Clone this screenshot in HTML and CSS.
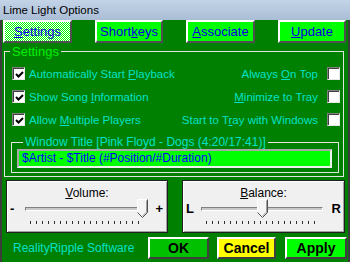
FILE: index.html
```html
<!DOCTYPE html>
<html lang="en">

<head>
    <meta charset="UTF-8">
    <title>Lime Light Options</title>
    <link rel="stylesheet" href="styles.css">
</head>

<body>
    <div class="window">
        <div class="titlebar">Lime Light Options</div>

        <div class="tabs">
            <div class="tab tab-active"><span><u>S</u>ettings</span></div>
            <div class="tab tab-narrow"><span>Short<u>k</u>eys</span></div>
            <div class="tab"><span><u>A</u>ssociate</span></div>
            <div class="tab tab-narrow"><span><u>U</u>pdate</span></div>
        </div>

        <fieldset class="group">
            <legend class="group-title">Settings</legend>
            <div class="options">
                <div class="opt"><span class="box checked"><svg width="9" height="9" viewBox="0 0 9 9"><polyline points="1,4 3.5,6.5 8,2" fill="none" stroke="#000" stroke-width="2"/></svg></span><span>Automatically Start <u>P</u>layback</span></div>
                <div class="opt opt-right"><span>Always <u>O</u>n Top</span><span class="box"></span></div>
                <div class="opt"><span class="box checked"><svg width="9" height="9" viewBox="0 0 9 9"><polyline points="1,4 3.5,6.5 8,2" fill="none" stroke="#000" stroke-width="2"/></svg></span><span>Show Song <u>I</u>nformation</span></div>
                <div class="opt opt-right"><span><u>M</u>inimize to Tray</span><span class="box"></span></div>
                <div class="opt"><span class="box checked"><svg width="9" height="9" viewBox="0 0 9 9"><polyline points="1,4 3.5,6.5 8,2" fill="none" stroke="#000" stroke-width="2"/></svg></span><span>Allow <u>M</u>ultiple Players</span></div>
                <div class="opt opt-right"><span>Start to T<u>r</u>ay with Windows</span><span class="box"></span></div>
            </div>

            <fieldset class="title-group">
                <legend class="title-legend">Window Title [Pink Floyd - Dogs (4:20/17:41)]</legend>
                <div class="title-input">$Artist - $Title (#Position/#Duration)</div>
            </fieldset>
        </fieldset>

        <div class="sliders">
            <div class="panel panel-volume">
                <div class="slider-label"><u>V</u>olume:</div>
                <div class="slider-row">
                    <span class="end end-left">-</span>
                    <div class="slider">
                        <div class="track"></div>
                        <div class="ticks"></div>
                        <svg class="thumb" style="--pos: 1" width="11" height="19" viewBox="0 0 11 19">
                            <polygon points="0.5,0.5 10.5,0.5 10.5,13.5 5.5,18.5 0.5,13.5" fill="#f4f4f4"/>
                            <polyline points="0.5,13.5 0.5,0.5 10.5,0.5" fill="none" stroke="#fff"/>
                            <polyline points="10.5,0.5 10.5,13.5 5.5,18.5 0.5,13.5" fill="none" stroke="#505050"/>
                            <polyline points="9.5,1.5 9.5,13 5.5,17" fill="none" stroke="#a0a0a0"/>
                        </svg>
                    </div>
                    <span class="end end-right">+</span>
                </div>
            </div>
            <div class="panel panel-balance">
                <div class="slider-label"><u>B</u>alance:</div>
                <div class="slider-row">
                    <span class="end end-left">L</span>
                    <div class="slider">
                        <div class="track"></div>
                        <div class="ticks"></div>
                        <svg class="thumb" style="--pos: 0.5" width="11" height="19" viewBox="0 0 11 19">
                            <polygon points="0.5,0.5 10.5,0.5 10.5,13.5 5.5,18.5 0.5,13.5" fill="#f4f4f4"/>
                            <polyline points="0.5,13.5 0.5,0.5 10.5,0.5" fill="none" stroke="#fff"/>
                            <polyline points="10.5,0.5 10.5,13.5 5.5,18.5 0.5,13.5" fill="none" stroke="#505050"/>
                            <polyline points="9.5,1.5 9.5,13 5.5,17" fill="none" stroke="#a0a0a0"/>
                        </svg>
                    </div>
                    <span class="end end-right end-wide">R</span>
                </div>
            </div>
        </div>

        <div class="footer">
            <span class="credit">RealityRipple Software</span>
            <div class="buttons">
                <div class="btn btn-ok">OK</div>
                <div class="btn btn-cancel">Cancel</div>
                <div class="btn btn-apply">Apply</div>
            </div>
        </div>
    </div>
</body>

</html>
```

FILE: styles.css
```css
body {
    margin: 0;
    width: 350px;
    height: 262px;
    overflow: hidden;
    font-family: "Liberation Sans", Arial, sans-serif;
}

.window {
    width: 350px;
    height: 262px;
    background-color: #008000;
    box-shadow: inset 2px 0 #3c3c3c, inset -2px 0 #3c3c3c;
    display: flex;
    flex-direction: column;
}

.titlebar {
    height: 20px;
    line-height: 20px;
    padding-left: 3px;
    font-size: 11.5px;
    color: #000;
    background: linear-gradient(#c3d4e7, #a9bdd5);
}

.tabs {
    height: 24px;
    display: flex;
    gap: 23px;
    padding-left: 3px;
}

.tab {
    box-sizing: border-box;
    width: 69px;
    height: 23px;
    background-color: #00ff00;
    border: 2px solid;
    border-color: #fff #505050 #505050 #fff;
    color: #0000e0;
    font-size: 13px;
    display: flex;
    align-items: center;
    justify-content: center;
}

.tab-narrow {
    width: 68px;
}

.tab-active {
    background: repeating-conic-gradient(#00ff00 0 25%, #ffffff 0 50%) 0 0 / 2px 2px;
}

.group {
    margin: 1px 6px 0 4px;
    padding: 0;
    border: 1px solid #e4e4e4;
    min-width: 0;
}

.group-title {
    margin-left: 5px;
    padding: 0 2px;
    font-size: 13px;
    line-height: 13px;
    color: #00ee00;
}

.options {
    display: grid;
    grid-template-columns: 1fr auto;
    grid-auto-rows: 23px;
    margin-top: 4px;
    padding: 0 3px 0 7px;
}

.opt {
    display: flex;
    align-items: center;
    gap: 4px;
    font-size: 11.5px;
    color: #00e0c8;
    white-space: nowrap;
}

.opt-right {
    justify-self: end;
    gap: 9px;
}

.box {
    box-sizing: border-box;
    width: 13px;
    height: 13px;
    background-color: #fff;
    border: 1px solid;
    border-color: #808080 #e8e8e8 #e8e8e8 #808080;
    box-shadow: inset 1px 1px #404040;
    display: flex;
    align-items: center;
    justify-content: center;
}

.box svg {
    margin: 1px 0 0 1px;
}

.title-group {
    margin: 5px 4px 3px 6px;
    padding: 0 6px 4px 5px;
    border: 1px solid #e4e4e4;
    min-width: 0;
}

.title-legend {
    margin-left: 6px;
    padding: 0 2px;
    font-size: 12px;
    line-height: 12px;
    color: #00e0c8;
}

.title-input {
    box-sizing: border-box;
    margin-top: 1px;
    height: 19px;
    padding-left: 3px;
    background-color: #00ff00;
    border: 2px solid;
    border-color: #a8a8a8 #f0f0f0 #f0f0f0 #a8a8a8;
    color: #0000ff;
    font-size: 12px;
    line-height: 15px;
    white-space: nowrap;
}

.sliders {
    display: flex;
    gap: 14px;
    margin-top: 3px;
    padding: 0 5px 0 6px;
}

.panel {
    box-sizing: border-box;
    height: 53px;
    background-color: #f0f0f0;
    border: 1px solid #202020;
    box-shadow: inset 1px 1px #fff, inset -1px -1px #a0a0a0;
}

.panel-volume {
    width: 162px;
}

.panel-balance {
    flex: 1;
}

.slider-label {
    text-align: center;
    font-size: 12px;
    line-height: 14px;
    padding-top: 5px;
    color: #000;
}

.slider-row {
    display: flex;
    margin-top: -1px;
}

.end {
    flex: none;
    width: 18px;
    line-height: 20px;
    font-size: 13px;
    font-weight: bold;
    color: #000;
}

.end-left {
    text-align: left;
    padding-left: 3px;
    box-sizing: border-box;
}

.end-right {
    width: 19px;
    text-align: right;
    padding-right: 4px;
    box-sizing: border-box;
}

.end-wide {
    width: 21px;
    padding-right: 3px;
}

.slider {
    position: relative;
    flex: 1;
    height: 26px;
}

.track {
    position: absolute;
    left: 0;
    right: 0;
    top: 8px;
    height: 4px;
    box-sizing: border-box;
    border: 1px solid;
    border-color: #808080 #fff #fff #808080;
    background-color: #c8c8c8;
}

.ticks {
    position: absolute;
    left: 5px;
    right: 5px;
    top: 22px;
    height: 3px;
    background: repeating-linear-gradient(to right, #303030 0 1px, transparent 1px 6px);
}

.thumb {
    position: absolute;
    top: 0;
    left: calc((100% - 11px) * var(--pos));
}

.footer {
    flex: 1;
    display: flex;
    align-items: center;
    padding: 0 3px 0 13px;
}

.credit {
    font-size: 12px;
    color: #00e0c8;
}

.buttons {
    margin-left: auto;
    display: flex;
    gap: 8px;
}

.btn {
    box-sizing: border-box;
    height: 22px;
    border: 2px solid;
    border-color: #fff #404040 #404040 #fff;
    font-size: 14px;
    font-weight: bold;
    color: #000;
    display: flex;
    align-items: center;
    justify-content: center;
}

.btn-ok {
    width: 61px;
    background-color: #00c000;
}

.btn-cancel {
    width: 59px;
    background-color: #ffff00;
}

.btn-apply {
    width: 62px;
    margin-left: 1px;
    background-color: #00ff00;
}
```
